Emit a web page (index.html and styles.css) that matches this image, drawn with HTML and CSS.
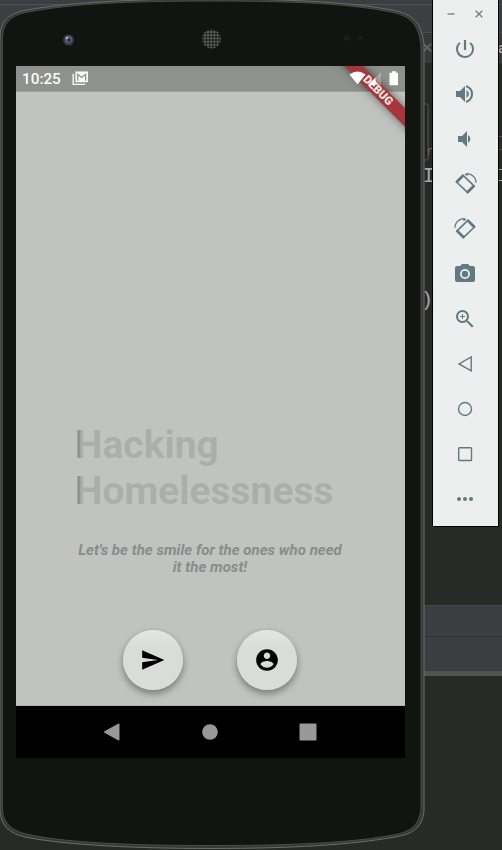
FILE: index.html
```html
<!DOCTYPE html>
<html lang="en">
<head>
<meta charset="utf-8">
<title>Emulator</title>
<link rel="stylesheet" href="styles.css">
</head>
<body>
<div class="desktop">
  <div class="editor">
    <div class="editor-menu"></div>
    <div class="editor-bar"></div>
    <div class="editor-tabs"><span class="tab-close">✕</span><span class="tab-name">a</span></div>
    <div class="editor-code">
      <span class="code-mark">r</span>
      <span class="code-i">I</span>
      <span class="code-paren">)</span>
    </div>
    <div class="editor-panel"></div>
    <div class="editor-panel tall"></div>
    <div class="editor-rest"></div>
  </div>
  <div class="edge-marks"><i class="edge-box"></i><i class="edge-i"></i></div>

  <div class="phone">
    <svg class="phone-body" viewBox="0 0 430 850" aria-hidden="true">
      <path d="M423 104h4q1 0 1 2v52q0 2-2 2h-3z" fill="#202120" stroke="#565856"/>
      <path d="M0 38C0 21 9 13 27 10C65 3 125-1 212-1S355 3 392 10C413 14 422 23 424 45V811C422 828 413 834 395 837C350 845 290 848.500 212 848.500S65 845 25 837C9 833 1 826 0 811Z" fill="#373936" stroke="#6c6e6b" stroke-width="1"/>
      <path d="M2.500 39C2.500 23 11 15 28 12C70 4 125 1 212 1S350 4 391 12C411 16 419 25 421 46V809C419 825 411 832 393 835C350 843 290 845.500 212 845.500S65 843 26 834C11 830 3 823 2.500 809Z" fill="#111410" stroke="#4a4c49" stroke-width="1"/>
      <circle cx="68.500" cy="40" r="5.500" fill="#353b46"/>
      <circle cx="68.500" cy="39.500" r="3.500" fill="#596477"/>
      <circle cx="69" cy="40" r="1.800" fill="#20293d"/>
      <circle cx="67" cy="38" r="1.200" fill="#acb2c0"/>
      <defs><pattern id="mesh" width="3.200" height="3.200" patternUnits="userSpaceOnUse"><rect width="3.200" height="3.200" fill="#5b5d5a"/><circle cx="1.600" cy="1.600" r="1.250" fill="#151714"/></pattern></defs>
      <circle cx="211.500" cy="39" r="9.500" fill="url(#mesh)"/>
      <circle cx="346.500" cy="38" r="3" fill="#1b1e1a"/><circle cx="360.500" cy="38" r="2.500" fill="#1a1d19"/>
    </svg>
    <div class="screen">
      <div class="status">
        <span class="clock">10:25</span>
        <svg class="mail" viewBox="0 0 18 16" aria-hidden="true"><path d="M1.200 3v11.300H14" fill="none" stroke="#fafbf9" stroke-width="1.500"/><path d="M3.500.5h13.500v11.500H3.500z" fill="#fafbf9"/><path d="M6 10.500V3.500l4.250 3.500L14.500 3.500v7" fill="none" stroke="#8e908d" stroke-width="1.300"/></svg>
      </div>
      <div class="content">
        <h1 class="title"><span>Hacking</span><br><span>Homelessness</span></h1>
        <p class="tagline">Let's be the smile for the ones who need<br>it the most!</p>
        <div class="actions">
          <button class="fab" aria-label="Send"><svg viewBox="0 0 24 24"><path d="M2 21l20.500-9L2 3v7l14.500 2L2 14z"/></svg></button>
          <button class="fab" aria-label="Account"><svg viewBox="0 0 24 24"><path d="M12 2C6.480 2 2 6.480 2 12s4.480 10 10 10 10-4.480 10-10S17.520 2 12 2zm0 3c1.660 0 3 1.340 3 3s-1.340 3-3 3-3-1.340-3-3 1.340-3 3-3zm0 14.200c-2.500 0-4.710-1.280-6-3.220.030-1.990 4-3.080 6-3.080s5.970 1.090 6 3.080c-1.290 1.940-3.500 3.220-6 3.220z"/></svg></button>
        </div>
      </div>
      <div class="navbar">
        <svg viewBox="0 0 18 18"><path d="M1.500 8.200L15.500.5q1 0 1 1v15q0 1-1 1L1.500 9.800q-1-.8 0-1.600z"/></svg>
        <svg viewBox="0 0 18 18"><circle cx="9" cy="9" r="7.800"/></svg>
        <svg viewBox="0 0 18 18"><rect x=".5" y=".5" width="17" height="17" rx="1"/></svg>
      </div>
      <div class="debug"><span>DEBUG</span></div>
      <svg class="signals" viewBox="0 0 52 18" aria-hidden="true"><path d="M.500 4.500Q8.500-1.500 16.500 4.500L8.500 14.500z" fill="#fff"/><path d="M32 2v13H19z" fill="#fff" fill-opacity=".28"/><path d="M26.500 7.500V15H19z" fill="#fff"/><path d="M43 1.200h4v1.500h2v12.500h-8.500V2.700H43z" fill="#fff"/></svg>
    </div>
  </div>

  <div class="toolbar">
    <div class="window-buttons">
      <svg viewBox="0 0 10 10"><path d="M1.500 5h7"/></svg>
      <svg viewBox="0 0 10 10"><path d="M1.700 1.700l6.600 6.600M8.300 1.700l-6.600 6.600"/></svg>
    </div>
    <div class="tool"><svg viewBox="1 1 22 22"><path d="M10.900 3h2.200v10h-2.200zM17.830 5.170l-1.420 1.420A6.920 6.920 0 0 1 19 12a7 7 0 1 1-11.420-5.420L6.170 5.170A9 9 0 1 0 21 12a8.940 8.940 0 0 0-3.170-6.830z"/></svg></div>
    <div class="tool"><svg viewBox="1 1 22 22"><path d="M3 9v6h4l5 5V4L7 9zm10.500-1v8a4.500 4.500 0 0 0 0-8zM13 3.200v2.100a7 7 0 0 1 0 13.400v2.100a9 9 0 0 0 0-17.600z"/></svg></div>
    <div class="tool"><svg viewBox="1 1 22 22"><path d="M5 9v6h4l5 5V4L9 9zm10-1v8a4.500 4.500 0 0 0 0-8z"/></svg></div>
    <div class="tool"><svg class="rotate" viewBox="0 0 24 24"><path class="device" d="M9 2.500L22 15 14.500 22.500 1.500 10z"/><path class="device-end" d="M9 3.300l-6.700 6.700M21.200 15l-6.700 6.700"/><path class="arc" d="M12 1.500C18-.5 24 4.500 24 11"/><path d="M11 1.500l4-1.800-1 4z"/></svg></div>
    <div class="tool"><svg class="rotate mirrored" viewBox="0 0 24 24"><path class="device" d="M9 2.500L22 15 14.500 22.500 1.500 10z"/><path class="device-end" d="M9 3.300l-6.700 6.700M21.200 15l-6.700 6.700"/><path class="arc" d="M12 1.500C18-.5 24 4.500 24 11"/><path d="M11 1.500l4-1.800-1 4z"/></svg></div>
    <div class="tool"><svg viewBox="1 1 22 22"><circle cx="12" cy="12" r="3.200"/><path d="M9 2L7.170 4H4a2 2 0 0 0-2 2v12a2 2 0 0 0 2 2h16a2 2 0 0 0 2-2V6a2 2 0 0 0-2-2h-3.170L15 2zm3 15a5 5 0 1 1 0-10 5 5 0 0 1 0 10z"/></svg></div>
    <div class="tool"><svg viewBox="1 1 22 22"><path d="M15.500 14h-.79l-.28-.27a6.500 6.500 0 1 0-.7.700l.27.280v.79l5 4.990L20.490 19zm-6 0a4.500 4.500 0 1 1 0-9 4.500 4.500 0 0 1 0 9zM12 10h-2v2H9v-2H7V9h2V7h1v2h2z"/></svg></div>
    <div class="tool"><svg class="outline" viewBox="0 0 22 22"><path d="M17.200 4v13.800L5 10.900z"/></svg></div>
    <div class="tool"><svg class="outline" viewBox="0 0 22 22"><circle cx="11" cy="11" r="6.500"/></svg></div>
    <div class="tool"><svg class="outline" viewBox="0 0 22 22"><rect x="4.700" y="4.700" width="12.800" height="12.800" rx=".8"/></svg></div>
    <div class="tool"><svg viewBox="0 0 22 22"><circle cx="5" cy="11" r="2"/><circle cx="11" cy="11" r="2"/><circle cx="17" cy="11" r="2"/></svg></div>
  </div>
</div>
</body>
</html>
```

FILE: styles.css
```css
* { box-sizing: border-box; }
body { margin: 0; font-family: Roboto, sans-serif; }
svg { display: block; }
.desktop { position: relative; width: 502px; height: 850px; overflow: hidden; background: #282a27; }

.editor { display: flex; flex-direction: column; height: 850px; }
.editor-menu { height: 5px; background: #3b3e40; border-bottom: 1px solid #505355; }
.editor-bar { height: 27px; background: #3b3f42; }
.editor-tabs { display: flex; justify-content: space-between; align-items: center; height: 31px; padding-left: 421px; background: #37393a; border-top: 1px solid #4b4e50; color: #686b6c; font-size: 15px; overflow: hidden; }
.tab-name { width: 4px; color: #c0c1be; overflow: hidden; }
.editor-code { display: flex; flex-direction: column; height: 542px; padding: 79px 0 0 425px; font-family: "Liberation Mono", monospace; font-size: 20px; line-height: 22px; }
.code-mark { height: 22px; margin-left: 1px; color: #b45b43; font-size: 12px; line-height: 20px; }
.code-i { height: 126px; margin-left: -2px; color: #a5aaa9; font-family: "DejaVu Sans Mono", monospace; font-size: 19px; }
.code-paren { color: #a5aaa9; margin-left: -4px; }
.editor-panel { height: 31px; background: #3b3e41; border-top: 1px solid #454849; }
.editor-panel.tall { height: 40px; border-top-color: #303335; border-bottom: 5px solid #505253; }
.editor-rest { flex: 1; background: #282a27; }
.edge-marks { position: absolute; right: 0; top: 136px; display: flex; flex-direction: column; gap: 19px; width: 4px; }
.edge-box { height: 14px; border: 1px solid #674b40; border-right: 0; }
.edge-i { height: 12px; border: solid #a5aaa9; border-width: 1px 0; }

.phone { position: absolute; left: 0; top: 0; width: 430px; height: 850px; padding: 66px 25px 92px 16px; }
.phone-body { position: absolute; left: 0; top: 0; width: 430px; height: 850px; }
.screen { position: relative; display: flex; flex-direction: column; width: 389px; height: 692px; overflow: hidden; background: #c1c3c0; }
.status { display: flex; align-items: center; gap: 11px; height: 26px; padding-left: 6px; background: #8f918e; border-bottom: 1px solid #a0a29f; color: #fafbf9; }
.clock { font-size: 15.3px; font-weight: 500; line-height: 24px; }
.mail { width: 17px; height: 15px; }
.signals { position: absolute; left: 332.5px; top: 4px; width: 52px; height: 18px; }
.content { display: flex; flex-direction: column; height: 614px; border-bottom: 1px solid #aeb0ad; }
.title { margin: 330px 0 0 59px; font-size: 39px; font-weight: 700; line-height: 46px; letter-spacing: -.03px; color: #acaeab; }
.title span { background: linear-gradient(90deg, #868885 0, #8d8f8c 4px, #acaeab 6px); background-clip: text; -webkit-background-clip: text; color: transparent; }
.tagline { margin: 28px 1px 0 0; text-align: center; font-size: 15px; letter-spacing: .03px; font-style: italic; font-weight: 700; line-height: 17px; color: #8a8c89; white-space: nowrap; }
.actions { display: flex; justify-content: center; gap: 54px; margin: 54px 1px 0 0; }
.fab { display: flex; align-items: center; justify-content: center; width: 60px; height: 60px; padding: 0; border: 0; border-radius: 50%; background: linear-gradient(#e4e6e3, #dadcd9 30%); box-shadow: 0 4px 7px rgba(0, 0, 0, .32), 0 1px 7px rgba(0, 0, 0, .08); }
.fab svg { width: 26px; height: 26px; fill: #000; }
.navbar { display: flex; justify-content: center; align-items: center; gap: 80px; height: 52px; padding-right: 2px; background: #000; }
.navbar svg { width: 18px; height: 18px; fill: #989896; }
.debug { position: absolute; left: 306px; top: 18px; display: flex; justify-content: center; width: 112px; height: 13px; background: #a5363b; box-shadow: 0 0 8px rgba(0, 0, 0, .5); transform: rotate(45deg); color: #f3e9e7; font-size: 11.5px; font-weight: 900; line-height: 13px; }

.toolbar { position: absolute; left: 432px; top: -1px; display: flex; flex-direction: column; width: 67px; height: 528px; background: #ecefed; border: 1px solid #000; }
.window-buttons { display: flex; justify-content: space-between; align-items: center; height: 26px; padding: 2px 14px 0 13px; }
.window-buttons svg { width: 10px; height: 10px; fill: none; stroke: #777b7b; stroke-width: 1.3; }
.tool { display: flex; align-items: center; justify-content: center; height: 45px; padding-right: 1px; }
.tool svg { width: 22px; height: 22px; fill: #607984; overflow: visible; }
.tool .rotate { width: 21px; height: 21px; }
.tool .rotate .device { fill: none; stroke: #607984; stroke-width: 1.8; stroke-linejoin: round; }
.tool .rotate .device-end { fill: none; stroke: #607984; stroke-width: 3; stroke-linecap: round; }
.tool .rotate .arc { fill: none; stroke: #607984; stroke-width: 1.5; }
.tool .mirrored { transform: scaleX(-1); }
.tool .outline { fill: none; stroke: #607984; stroke-width: 1.4; }
```
